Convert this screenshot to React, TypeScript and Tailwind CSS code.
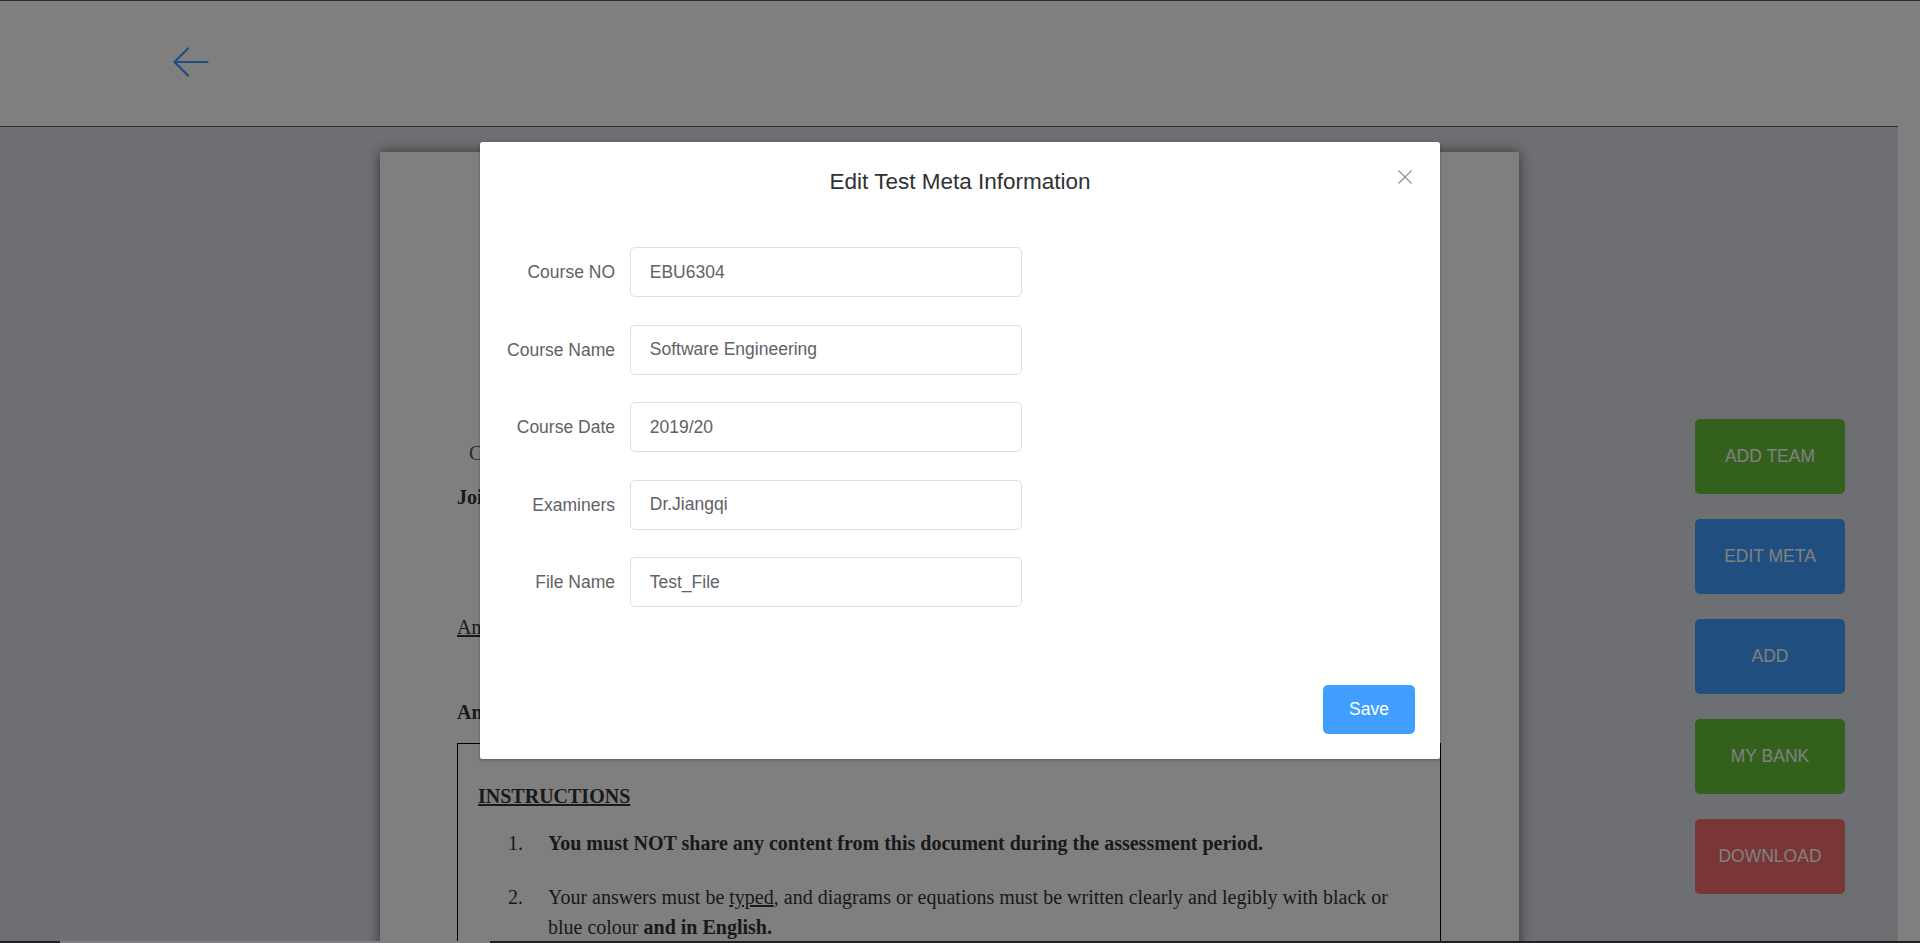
import React from "react";

const fields = [
  { label: "Course NO", value: "EBU6304" },
  { label: "Course Name", value: "Software Engineering" },
  { label: "Course Date", value: "2019/20" },
  { label: "Examiners", value: "Dr.Jiangqi" },
  { label: "File Name", value: "Test_File" },
];

const sideButtons = [
  { label: "ADD TEAM", cls: "bg-[#67c23a]" },
  { label: "EDIT META", cls: "bg-[#409eff]" },
  { label: "ADD", cls: "bg-[#409eff]" },
  { label: "MY BANK", cls: "bg-[#67c23a]" },
  { label: "DOWNLOAD", cls: "bg-[#f56c6c]" },
];

function Paper() {
  return (
    <div className="mt-[25px] h-[900px] w-[1139px] shrink-0 self-start bg-white pl-[77px] pr-[78px] pt-[286px] font-['Liberation_Serif','Times_New_Roman',serif] text-[20px] text-[#333] shadow-[0_0_12px_rgba(0,0,0,0.55)]">
      <div className="pl-[12px] leading-[30px] text-[#555]">Course</div>
      <div className="mt-[14px] font-bold leading-[30px]">Joint</div>
      <div className="mt-[100px] leading-[30px] underline">Answer</div>
      <div className="mt-[55px] font-bold leading-[30px]">Answer</div>
      <div className="mt-[16px] h-[400px] border border-black pl-[20px] pr-[20px] pt-[37px]">
        <div className="font-bold leading-[30px] underline">INSTRUCTIONS</div>
        <div className="mt-[17px] flex leading-[30px]">
          <span className="ml-[30px] w-[40px] shrink-0">1.</span>
          <span className="font-bold">
            You must NOT share any content from this document during the assessment period.
          </span>
        </div>
        <div className="mt-[24px] flex leading-[30px]">
          <span className="ml-[30px] w-[40px] shrink-0">2.</span>
          <span className="whitespace-nowrap">
            Your answers must be <span className="underline">typed</span>, and diagrams or equations must be
            written clearly and legibly with black or
            <br />
            blue colour <span className="font-bold">and in English.</span>
          </span>
        </div>
      </div>
    </div>
  );
}

export default function App() {
  return (
    <div className="relative h-[943px] w-[1920px] overflow-hidden bg-white font-['Liberation_Sans',Arial,sans-serif]">
      <header className="flex h-[126px] items-center border-t border-[#555] bg-white pb-[3px] pl-[172px]">
        <svg width="37" height="30" viewBox="0 0 37 30" fill="none" stroke="#409eff" strokeWidth="2.2" strokeLinecap="round" strokeLinejoin="round">
          <path d="M16 1.5 L2.5 15 L16 28.5" />
          <path d="M2.5 15 H35.5" />
        </svg>
      </header>
      <div className="flex h-[815px]">
        <main className="flex flex-1 overflow-hidden border-t border-[#555] bg-[#dcdfe6] pl-[380px]">
          <Paper />
          <div className="ml-[176px] mt-[292px] flex shrink-0 flex-col gap-[25px]">
            {sideButtons.map((b) => (
              <div
                key={b.label}
                className={`flex h-[75px] w-[150px] items-center justify-center rounded-[5px] text-[17.5px] text-white ${b.cls}`}
              >
                {b.label}
              </div>
            ))}
          </div>
        </main>
        <div className="w-[22px] bg-white" />
      </div>
      <div className="flex h-[2px]">
        <div className="w-[60px] bg-[#444]" />
        <div className="w-[430px] bg-white" />
        <div className="flex-1 bg-[#444]" />
      </div>

      {/* modal mask */}
      <div className="absolute inset-0 bg-black/50" />

      {/* dialog */}
      <div className="absolute inset-0 flex items-start justify-center pt-[142px]">
        <div className="w-[960px] rounded-[2.5px] bg-white shadow-[0_1px_3px_rgba(0,0,0,0.3)]">
          <div className="grid grid-cols-[1fr_auto_1fr] px-[25px] pb-[12.5px] pt-[25px]">
            <div />
            <div className="text-center text-[22.5px] leading-[30px] text-[#303133]">Edit Test Meta Information</div>
            <div className="flex justify-end self-start">
              <svg width="20" height="20" viewBox="0 0 20 20" fill="none" stroke="#909399" strokeWidth="1.3">
                <path d="M3.5 3.5 L16.5 16.5 M16.5 3.5 L3.5 16.5" />
              </svg>
            </div>
          </div>
          <div className="flex flex-col gap-[27.5px] px-[25px] pb-[65px] pt-[37.5px]">
            {fields.map((f) => (
              <div key={f.label} className="flex">
                <label className="w-[125px] shrink-0 pr-[15px] text-right text-[17.5px] leading-[50px] text-[#606266]">
                  {f.label}
                </label>
                <input
                  readOnly
                  value={f.value}
                  className="h-[50px] w-[392px] rounded-[5px] border border-[#dcdfe6] bg-white px-[18.75px] text-[17.5px] text-[#606266] outline-none"
                />
              </div>
            ))}
          </div>
          <div className="flex justify-end pb-[25px] pr-[25px] pt-[12.5px]">
            <button className="h-[49px] w-[92px] rounded-[5px] bg-[#409eff] text-[17.5px] text-white">Save</button>
          </div>
        </div>
      </div>
    </div>
  );
}
